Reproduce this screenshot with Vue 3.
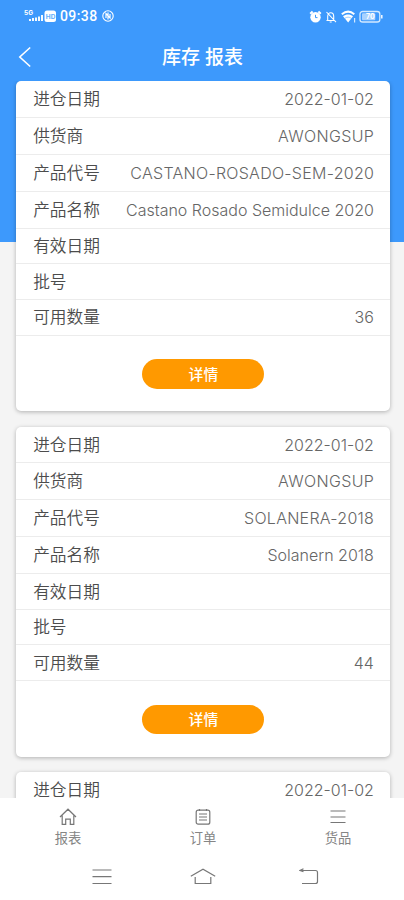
<script setup>
const cards = [
  { date: '2022-01-02', supplier: 'AWONGSUP', code: 'CASTANO-ROSADO-SEM-2020', name: 'Castano Rosado Semidulce 2020', qty: '36' },
  { date: '2022-01-02', supplier: 'AWONGSUP', code: 'SOLANERA-2018', name: 'Solanern 2018', qty: '44' },
  { date: '2022-01-02' },
]
const fields = [
  { key: 'date', label: '进仓日期' },
  { key: 'supplier', label: '供货商' },
  { key: 'code', label: '产品代号' },
  { key: 'name', label: '产品名称' },
  { key: 'expiry', label: '有效日期' },
  { key: 'batch', label: '批号' },
  { key: 'qty', label: '可用数量' },
]
const rowsOf = (card) => (card.code ? fields : fields.slice(0, 1))
</script>

<template>
  <div class="screen">
    <header class="status">
      <svg class="signal" width="34" height="16" viewBox="0 0 34 16">
        <text x="0" y="6.5" font-size="6.5" font-weight="700" fill="#fff">5G</text>
        <path d="M6 13v-2M9 13v-3M12 13v-3.5M15 13V8.5M18 13V7" stroke="#fff" stroke-width="1.9" />
        <rect x="20.5" y="2.5" width="11.5" height="11.5" rx="2.5" fill="#fff" />
        <text x="21.8" y="10.6" font-size="6.5" font-weight="700" fill="#64aefb">HD</text>
      </svg>
      <span class="time">09:38</span>
      <svg class="nfc" width="12" height="12" viewBox="0 0 12 12" fill="none" stroke="#fff">
        <circle cx="6" cy="6" r="5.2" stroke-width="1.1" />
        <path d="M4 8V3.5l4 4.5V4M6 2.5v7" stroke-width="1.2" />
      </svg>
      <span class="spacer"></span>
      <svg class="indicators" width="74" height="14" viewBox="0 0 74 14" fill="none" stroke="#fff">
        <circle cx="6.5" cy="7.2" r="5.2" fill="#fff" stroke="none" />
        <path d="M1.2 3.8 3.6 1.6M11.8 3.8 9.4 1.6" stroke-width="2" />
        <path d="M6.5 4.8v2.8h2" stroke="#3d99fc" stroke-width="1" />
        <path d="M17.5 10.5h8.3M18.7 10V6.5c0-5 6-5 6 0V10M20.7 12h2M17.5 2l9.5 10.2" stroke-width="1.1" />
        <path d="M32.8 4.2c4-3.2 8.7-3.2 12.5 0" stroke-width="2" />
        <path d="M34 6.2c3-2.4 7-2.4 10 0l-4.8 6.2Z" fill="#fff" stroke="none" />
        <path d="M36 8.2c2-1.4 4.2-1.4 6.2 0" stroke="#3d99fc" stroke-width=".5" />
        <path d="M45.6 8v4.5" stroke-width="1.2" stroke="#d3e9ff" />
        <rect x="51" y="1.5" width="19.8" height="10.5" rx="2.6" stroke-width="1.3" stroke="#d3e9ff" />
        <rect x="53" y="3.3" width="13.3" height="7" rx="1" fill="#a9d2ff" stroke="none" />
        <path d="M72.8 5v3.5" stroke-width="1.4" />
        <text x="57" y="9.4" font-size="7" font-weight="700" fill="#fff" stroke="none">70</text>
      </svg>
    </header>
    <div class="titlebar">
      <svg class="back" width="14" height="22" viewBox="0 0 14 22"><path d="M12.2 1.5 1.8 11l10.4 9.5" fill="none" stroke="#fff" stroke-width="1.6" /></svg>
      <h1>库存 报表</h1>
    </div>
    <main class="list">
      <section v-for="(card, i) in cards" :key="i" class="card">
        <div v-for="f in rowsOf(card)" :key="f.key" class="row" :class="f.key">
          <span class="label">{{ f.label }}</span>
          <span v-if="card[f.key]" class="value">{{ card[f.key] }}</span>
        </div>
        <div v-if="card.code" class="action"><button>详情</button></div>
      </section>
    </main>
    <nav class="tabs">
      <div class="tab">
        <svg width="18" height="18" viewBox="0 0 18 18"><path d="M1 9 9 1.2 17 9M3.2 7.5v8.8h3.5v-5.2h4.6v5.2h3.5V7.5" /></svg>
        <span>报表</span>
      </div>
      <div class="tab">
        <svg width="18" height="18" viewBox="0 0 18 18"><rect x="2.2" y="2.2" width="13.6" height="14" rx="2" /><path d="M5 6h8M5 9h8M5 12h8M5.5 1v2M12.5 1v2" /></svg>
        <span>订单</span>
      </div>
      <div class="tab">
        <svg width="18" height="18" viewBox="0 0 18 18"><path d="M1.5 3h15M1.5 9h15M1.5 14.5h15" /></svg>
        <span>货品</span>
      </div>
    </nav>
    <footer class="system">
      <svg width="20" height="18" viewBox="0 0 20 18"><path d="M.5 2h19M.5 8.7h19M.5 15.5h19" /></svg>
      <svg width="26" height="18" viewBox="0 0 26 18"><path d="M.8 8.2 13 1.2l12.2 7M5.2 9v6.5h15.6V9" /></svg>
      <svg width="20" height="18" viewBox="0 0 20 18"><path d="M2 2.5h14.5q2 0 2 2v9q0 2-2 2H3M4.5.8 1 2.5l3.5 1.2" /></svg>
    </footer>
  </div>
</template>

<style>
body { overflow: hidden; }
</style>
<style scoped>
.screen {
  width: 404px; height: 900px; overflow: hidden; display: flex; flex-direction: column;
  background: linear-gradient(#3d99fc 242.5px, #f4f4f4 242.5px);
  font-family: Inter, "Noto Sans CJK SC", sans-serif;
}
.screen * { box-sizing: border-box; }
.status { height: 32px; flex: none; display: flex; align-items: center; padding: 0 21px 0 24px; }
.signal { margin-right: 2px; flex: none; }
.time { width: 38px; font: 500 14px/16px Roboto, sans-serif; letter-spacing: .4px; color: #fff; }
.nfc { margin-left: 4px; }
.indicators { margin-top: 1px; }
.spacer { flex: 1; }
.titlebar { height: 49px; flex: none; display: grid; grid-template-columns: 38px 1fr 37px; align-items: center; }
.back { margin-left: 18px; }
h1 { margin: 2px 0 0; text-align: center; font: 500 19px/30px Inter, "Noto Sans CJK SC", sans-serif; color: #fff; }
.list { height: 716.5px; flex: none; overflow: hidden; padding: .3px 13.6px 0 16.4px; display: flex; flex-direction: column; gap: 15.4px; }
.card { min-height: 330px; flex: none; background: #fff; border-radius: 5px; box-shadow: 0 1px 4px rgba(0, 0, 0, .28); }
.card:last-child { min-height: 60px; }
.row { height: 37px; display: flex; justify-content: space-between; align-items: center; padding: 0 16.5px 0 16.8px; border-bottom: 1px solid #ececec; }
.row.date { height: 36.8px; }
.row.expiry, .row.batch { height: 35.3px; }
.row.qty { height: 36.4px; }
.label { font-size: 16.7px; line-height: 24px; color: #4c4c4c; font-weight: 350; }
.value { font-size: 16px; line-height: 24px; color: #666; font-weight: 300; white-space: nowrap; }
.supplier .value { letter-spacing: .36px; margin-right: -.36px; }
.code .value { letter-spacing: .27px; margin-right: -.27px; }
.action { display: flex; justify-content: center; padding-top: 23.2px; }
button { width: 122px; height: 29.5px; border: 0; padding: 0 0 2px; border-radius: 15px; background: #ff9900; color: #fff; font: 500 14.8px/27px "Noto Sans CJK SC", sans-serif; }
.tabs { height: 59.5px; flex: none; display: grid; grid-template-columns: repeat(3, 135px); background: #fff; padding: 10px 0 0 .6px; }
.tab { display: flex; flex-direction: column; align-items: center; gap: 2px; font-size: 13.3px; line-height: 20px; color: #858585; }
.tab svg, .system svg { fill: none; stroke: #777; stroke-width: 1.2; }
.system { flex: 1; background: #fff; display: grid; grid-template-columns: 20px 26px 20px; column-gap: 78px; align-items: start; padding: 11px 0 0 92px; }
.system svg:last-child { margin-left: 5px; }
</style>
